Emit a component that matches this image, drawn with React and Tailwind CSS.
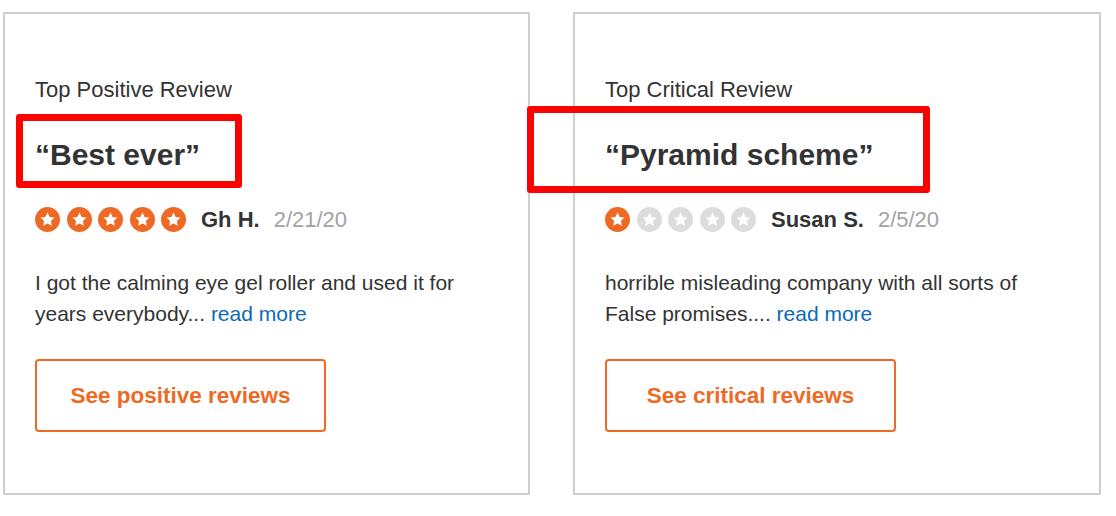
import React from 'react';

const reviews = [
    {
        label: "Top Positive Review",
        title: "Best ever",
        rating: 5,
        name: "Gh H.",
        date: "2/21/20",
        body: "I got the calming eye gel roller and used it for years everybody...",
        cta: "See positive reviews",
        width: "w-[527px]",
    },
    {
        label: "Top Critical Review",
        title: "Pyramid scheme",
        rating: 1,
        name: "Susan S.",
        date: "2/5/20",
        body: "horrible misleading company with all sorts of False promises....",
        cta: "See critical reviews",
        width: "w-[528px]",
    },
];

const StarDot = ({ filled }) => (
    <span className={`flex h-[25px] w-[25px] items-center justify-center rounded-full ${filled ? "bg-[#ee6a24]" : "bg-[#dcdcdc]"}`}>
        <svg viewBox="0 0 24 24" className="h-[17px] w-[17px]" fill="#ffffff">
            <path d="M12 2.2l3 6.2 6.8.9-5 4.7 1.3 6.8L12 17.5l-6.1 3.3 1.3-6.8-5-4.7 6.8-.9z" />
        </svg>
    </span>
);

const ReviewCard = ({ review }) => (
    <div className={`${review.width} h-[483px] shrink-0 border-2 border-[#ccd0d5] bg-white px-[30px] pt-[63px]`}>
        <p className="text-[22px] leading-[26px] text-[#333]">{review.label}</p>
        <h2 className="mt-[34px] text-[30px] font-bold leading-[36px] text-[#333]">“{review.title}”</h2>

        <div className="mt-[34px] flex items-center">
            <div className="flex gap-[6.5px]">
                {[1, 2, 3, 4, 5].map((n) => (
                    <StarDot key={n} filled={n <= review.rating} />
                ))}
            </div>
            <span className="ml-[15px] text-[22px] font-bold leading-[25px] text-[#333]">{review.name}</span>
            <span className="ml-[14px] text-[22px] leading-[25px] text-[#a3a3a3]">{review.date}</span>
        </div>

        <p className="mt-[35px] max-w-[440px] text-[21px] leading-[31px] text-[#333]">
            {review.body} <a href="#" className="text-[#0b6bb3]">read more</a>
        </p>

        <button className="mt-[30px] flex h-[73px] w-[291px] items-center justify-center rounded-[4px] border-2 border-[#ee6a24] bg-white text-[22.5px] font-bold text-[#ee6a24]">
            {review.cta}
        </button>
    </div>
);

export default function App() {
    return (
        <div className="relative h-[516px] w-[1116px] overflow-hidden bg-white font-['Liberation_Sans',Arial,sans-serif]">
            <div className="flex gap-[43px] pl-[3px] pt-[12px]">
                {reviews.map((r) => (
                    <ReviewCard key={r.label} review={r} />
                ))}
            </div>

            {/* annotation boxes */}
            <div className="absolute left-[16px] top-[114px] h-[74px] w-[226px] rounded-[3px] border-[7px] border-[#ff0000]" />
            <div className="absolute left-[527px] top-[106px] h-[87px] w-[403px] rounded-[3px] border-[7px] border-[#ff0000]" />
        </div>
    );
}
